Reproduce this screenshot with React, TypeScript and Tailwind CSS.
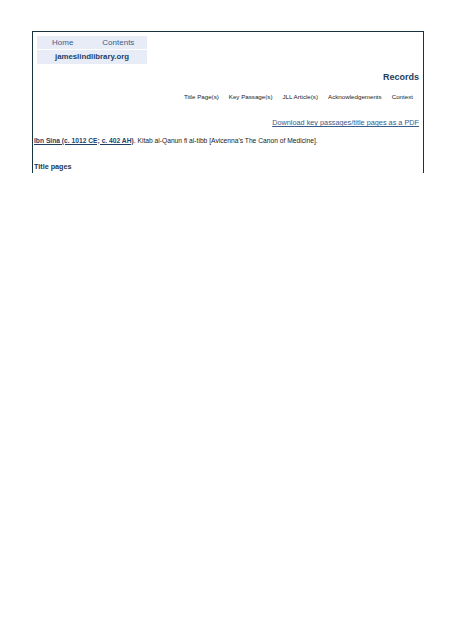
import React from "react";

const navLinks = ["Title Page(s)", "Key Passage(s)", "JLL Article(s)", "Acknowledgements", "Context"];

export default function App() {
  return (
    <div className="w-[452px] h-[640px] bg-white" style={{ fontFamily: '"Liberation Sans", Arial, sans-serif' }}>
      <div className="pt-[31px] pl-[32px]">
        <div className="w-[392px] h-[142px] border-t border-l border-r border-[#15343d] px-[4px] pt-[4px]">
          {/* Top nav box */}
          <div className="w-[110px] bg-[#e8ecf6]">
            <div className="flex h-[13px] items-center text-[8px] text-[#3d5c8c] leading-none">
              <span className="ml-[15px]">Home</span>
              <span className="ml-[29px]">Contents</span>
            </div>
            <div className="h-px bg-white" />
            <div className="h-[14px] flex items-center justify-center text-[7.8px] font-bold text-[#23426b] leading-none">
              jameslindlibrary.org
            </div>
          </div>

          {/* Records heading */}
          <div className="mt-[9px] text-right text-[9px] font-bold text-[#1d3d5e] leading-none">
            Records
          </div>

          {/* Sub nav */}
          <div className="mt-[12px] flex justify-end gap-[10px] pr-[6px] text-[6.2px] text-[#222] leading-none">
            {navLinks.map((l) => (
              <span key={l}>{l}</span>
            ))}
          </div>

          {/* Download */}
          <div className="mt-[19px] text-right text-[7.3px] leading-none">
            <a className="text-[#3b5c88] underline">Download key passages/title pages as a PDF</a>
          </div>

          {/* Record line */}
          <div className="mt-[11px] text-[6.7px] leading-none text-[#222] -ml-[3px]">
            <a className="font-bold underline text-[#1f3f66]">Ibn Sina (c. 1012 CE; c. 402 AH)</a>. Kitab al-Qanun fi al-tibb
            [Avicenna's The Canon of Medicine].
          </div>

          <div className="mt-[19px] text-[7.2px] font-bold leading-none text-[#1d3550] -ml-[3px]">Title pages</div>
        </div>
      </div>
    </div>
  );
}
